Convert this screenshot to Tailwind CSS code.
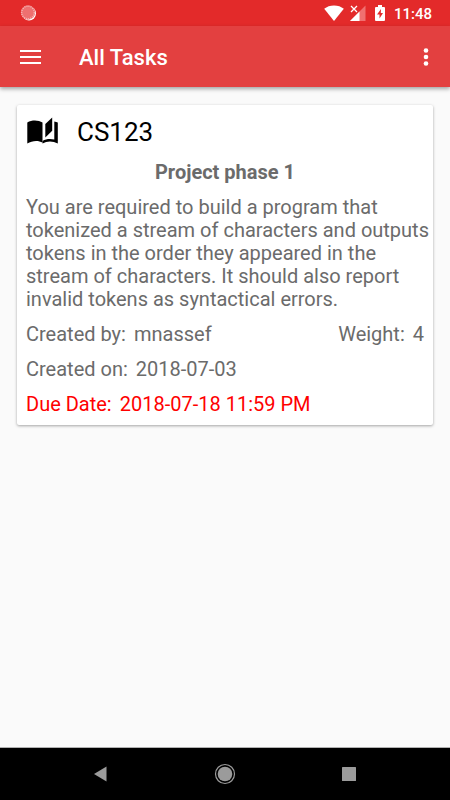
<!DOCTYPE html>
<html lang="en">
<head>
<meta charset="utf-8">
<meta name="viewport" content="width=device-width, initial-scale=1">
<title>All Tasks</title>
<script src="https://cdn.jsdelivr.net/npm/@tailwindcss/browser@4"></script>
</head>
<body class="flex min-h-screen flex-col bg-[#fafafa] font-['Roboto',sans-serif]">
  <div class="flex h-[26px] shrink-0 items-center justify-between bg-[#e32a2a] pr-[18px] pl-5 text-white">
    <svg class="size-4" viewBox="0 0 16 16" aria-hidden="true">
      <circle cx="9" cy="8.500" r="7" fill="#fff"/>
      <circle cx="8" cy="7.500" r="7.200" fill="#ee7070"/>
      <circle cx="8" cy="7.500" r="6.300" fill="none" stroke="#f5b4b4" stroke-width="1.400" stroke-dasharray="1.100 1"/>
    </svg>
    <div class="flex items-center">
      <svg class="h-4 w-5" viewBox="0 0 20 16" aria-hidden="true"><path d="M10 16 .2 3.800C2.800 1.500 6.200.400 10 .400s7.200 1.100 9.800 3.400z" fill="#fff"/></svg>
      <svg class="ml-1.5 h-4 w-4" viewBox="0 0 16 16" aria-hidden="true">
        <path d="M15.500.5V16H0z" fill="#f07070"/>
        <path d="M0 0h8v8H0z" fill="#e32a2a"/>
        <path d="m1 1 6 6M7 1 1 7" stroke="#fff" stroke-width="1.300"/>
        <path d="M9.500 6.500V16H0z" fill="#fff"/>
      </svg>
      <svg class="ml-2 h-4 w-3" viewBox="0 0 12 16" aria-hidden="true">
        <path d="M4 0h4v2h2q1 0 1 1v12q0 1-1 1H2q-1 0-1-1V3q0-1 1-1h2z" fill="#fff"/>
        <path d="M7 4 3 9.500h2.500V13.500L9 8H6.800z" fill="#e32a2a"/>
      </svg>
      <span class="ml-2 pt-px text-[15px] leading-5 font-medium">11:48</span>
    </div>
  </div>
  <header class="flex h-[61px] shrink-0 items-center bg-[#e34040] pr-3 pl-5 text-white shadow-[0_2px_4px_rgba(0,0,0,0.35)]">
    <button type="button" aria-label="Open menu" class="flex h-10 w-[21px] items-center">
      <svg class="h-4 w-[21px]" viewBox="0 0 21 16" aria-hidden="true"><path d="M0 2h21M0 8h21M0 14h21" stroke="#fff" stroke-width="2.200"/></svg>
    </button>
    <h1 class="ml-[38px] pt-0.5 text-[22px] leading-7 font-medium">All Tasks</h1>
    <button type="button" aria-label="More options" class="ml-auto flex h-10 w-6 items-center justify-center">
      <svg class="h-5 w-5" viewBox="0 0 20 20" fill="#fff" aria-hidden="true"><circle cx="10" cy="3.500" r="2.300"/><circle cx="10" cy="10" r="2.300"/><circle cx="10" cy="16.500" r="2.300"/></svg>
    </button>
  </header>
  <main class="grow px-[17px] pt-[18px]">
    <article class="flex flex-col gap-3 rounded-xs bg-white px-[9px] pt-2 pb-[9px] text-xl leading-[23px] text-[#6b6b6b] shadow-[0_1px_3px_rgba(0,0,0,0.35)]">
      <div class="flex h-9 items-center gap-[18px]">
        <svg class="h-7 w-[33px]" viewBox="0 0 33 28" aria-hidden="true">
          <path d="M1.300 5.500C6 2.800 12.500 3 16.500 5.600V25.600C12.500 23.300 6 23.500 1.300 26.600z"/>
          <path d="M19.300 7 26.200 .4V13.800L19.300 20.600z"/>
          <path d="M28.300 4.400Q30.300 4.700 31.800 5.600V26.600C27 23.800 21 23.800 16.500 26.500V24C20 21.800 24.500 21.500 28.300 22.600z"/>
        </svg>
        <h2 class="pt-0.5 text-[26px] leading-9 text-black">CS123</h2>
      </div>
      <h3 class="text-center font-bold">Project phase 1</h3>
      <p class="-mr-2">You are required to build a program that tokenized a stream of characters and outputs tokens in the order they appeared in the stream of characters. It should also report invalid tokens as syntactical errors.</p>
      <div class="flex justify-between">
        <p class="flex gap-2"><span>Created by:</span><span>mnassef</span></p>
        <p class="flex gap-2"><span>Weight:</span><span>4</span></p>
      </div>
      <p class="flex gap-2"><span>Created on:</span><span>2018-07-03</span></p>
      <p class="flex gap-2 text-[#ff0000]"><span>Due Date:</span><span>2018-07-18 11:59 PM</span></p>
    </article>
  </main>
  <nav aria-label="System navigation" class="flex h-[53px] shrink-0 items-center justify-around border-t border-[#b0b0b0] bg-black px-[38px]">
    <button type="button" aria-label="Back" class="flex size-10 items-center justify-center"><svg class="size-6" viewBox="0 0 24 24" aria-hidden="true"><path d="M18.500 4.500v15L6 12z" fill="#9b9b9b"/></svg></button>
    <button type="button" aria-label="Home" class="flex size-10 items-center justify-center"><svg class="size-6" viewBox="0 0 24 24" aria-hidden="true"><circle cx="12" cy="12" r="9.500" fill="none" stroke="#9b9b9b" stroke-width="1.200"/><circle cx="12" cy="12" r="7.300" fill="#9b9b9b"/></svg></button>
    <button type="button" aria-label="Recent apps" class="flex size-10 items-center justify-center"><svg class="size-6" viewBox="0 0 24 24" aria-hidden="true"><rect x="4" y="5" width="14" height="14" rx=".5" fill="#9b9b9b"/></svg></button>
  </nav>
</body>
</html>
